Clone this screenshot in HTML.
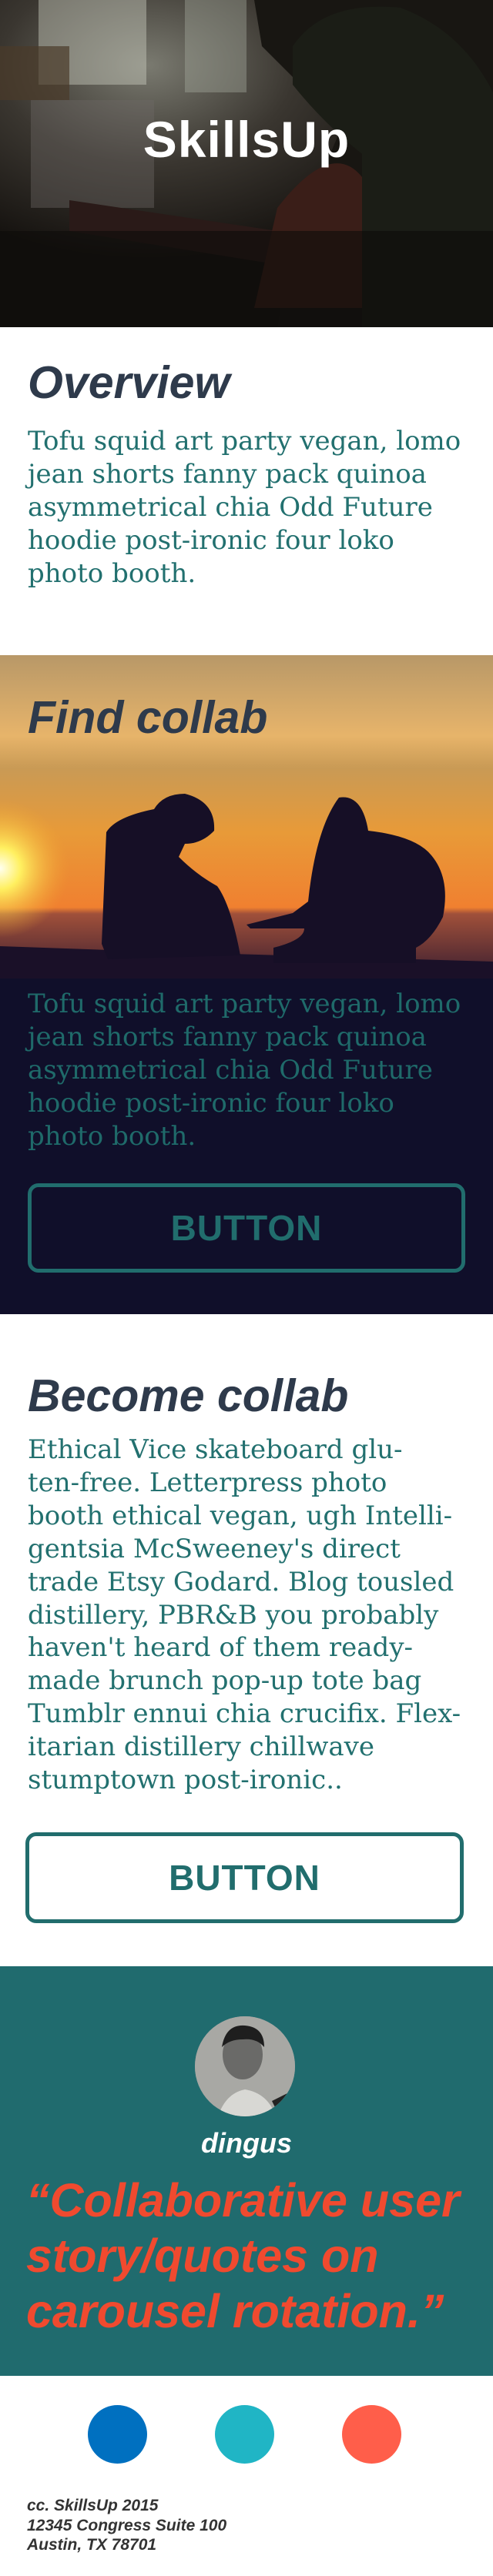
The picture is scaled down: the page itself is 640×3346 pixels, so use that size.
<!DOCTYPE html>
<html><head><meta charset="utf-8"><style>
*{margin:0;padding:0;box-sizing:border-box}
body{width:640px;height:3346px;position:relative;background:#fff;overflow:hidden;font-family:"Liberation Sans",sans-serif}
.abs{position:absolute}
h2{position:absolute;left:36px;font:italic bold 59px/1 "Liberation Sans",sans-serif;color:#2e3a4b;white-space:nowrap}
.body{position:absolute;left:36px;font:34px/43px "DejaVu Serif",serif;color:#22706f;white-space:pre}
.btn{position:absolute;border:5px solid #216d6d;border-radius:14px;color:#216d6d;font:bold 46px/1 "Liberation Sans",sans-serif;display:flex;align-items:center;justify-content:center;letter-spacing:1px}
.dot{position:absolute;width:77px;height:76px;border-radius:50%;top:3124px}
</style></head><body>
<!-- hero -->
<div class="abs" style="left:0;top:0;width:640px;height:425px;overflow:hidden;background:#1a1614">
<svg width="640" height="425" viewBox="0 0 640 425">
<defs>
<radialGradient id="w" cx="0.3" cy="0.2" r="0.6"><stop offset="0" stop-color="#7a7a70"/><stop offset="0.5" stop-color="#3a3630"/><stop offset="1" stop-color="#15120f"/></radialGradient>
</defs>
<rect width="640" height="425" fill="url(#w)"/>
<rect x="50" y="0" width="140" height="110" fill="#c8cabd" opacity=".45"/>
<rect x="240" y="0" width="80" height="120" fill="#a8aca0" opacity=".4"/>
<rect x="0" y="60" width="90" height="70" fill="#4a3a2a" opacity=".7"/>
<rect x="40" y="130" width="160" height="140" fill="#6e6a66" opacity=".4"/>
<path d="M330 0 L640 0 L640 425 L360 425 L380 300 L420 220 L450 150 L400 120 L340 60Z" fill="#181612"/>
<path d="M380 60 Q420 0 520 10 Q600 40 640 120 L640 425 L470 425 L470 200 Q420 160 380 110Z" fill="#1b1d16"/>
<path d="M90 260 L360 300 L420 320 L400 350 L90 300Z" fill="#2a1a18"/>
<path d="M360 270 Q430 180 470 230 L470 400 L330 400Z" fill="#3a1e18"/>
<rect x="0" y="300" width="640" height="125" fill="#0e0c0a" opacity=".6"/>
</svg>
<div class="abs" style="left:0;width:640px;top:148px;text-align:center;color:#fff;font:bold 66px/1 'Liberation Sans',sans-serif;letter-spacing:1px">SkillsUp</div>
</div>

<h2 style="top:468px">Overview</h2>
<div class="body" style="top:552px">Tofu squid art party vegan, lomo
jean shorts fanny pack quinoa
asymmetrical chia Odd Future
hoodie post-ironic four loko
photo booth.</div>

<!-- find collab -->
<div class="abs" style="left:0;top:851px;width:640px;height:856px;background:#100f2a;overflow:hidden">
<svg width="640" height="420" viewBox="0 0 640 420" style="position:absolute;left:0;top:0">
<defs>
<linearGradient id="s" x1="0" y1="0" x2="0" y2="1"><stop offset="0" stop-color="#b89868"/><stop offset="0.25" stop-color="#e7b46a"/><stop offset="0.35" stop-color="#c99a55"/><stop offset="0.55" stop-color="#e89a38"/><stop offset="0.78" stop-color="#f08030"/><stop offset="0.8" stop-color="#a0503a"/><stop offset="1" stop-color="#3a1e30"/></linearGradient>
<radialGradient id="sun" cx="0" cy="277" r="90" gradientUnits="userSpaceOnUse"><stop offset="0" stop-color="#fffff0"/><stop offset="0.3" stop-color="#fff060"/><stop offset="1" stop-color="#f0a030" stop-opacity="0"/></radialGradient>
</defs>
<rect width="640" height="420" fill="url(#s)"/>
<rect width="640" height="420" fill="url(#sun)"/>
<path d="M0 378 L200 385 L640 398 L640 420 L0 420Z" fill="#1a1028"/>
<g fill="#160f26">
<path d="M132 375 L138 230 Q150 210 200 200 Q212 180 240 180 Q280 190 278 228 Q262 245 240 245 L232 262 Q255 285 282 300 Q300 325 312 390 L140 395Z"/>
<path d="M320 350 L380 335 L400 320 Q410 225 440 185 Q470 180 478 228 Q540 235 560 260 Q585 290 575 340 Q560 370 540 380 L540 400 L355 400 L355 380 Q395 370 395 355 L325 355Z"/>
</g>
</svg>
<h2 style="top:52px">Find collab</h2>
<div class="body" style="top:432px;color:#1f6a6a">Tofu squid art party vegan, lomo
jean shorts fanny pack quinoa
asymmetrical chia Odd Future
hoodie post-ironic four loko
photo booth.</div>
<div class="btn" style="left:36px;top:686px;width:568px;height:116px">BUTTON</div>
</div>

<h2 style="top:1784px">Become collab</h2>
<div class="body" style="top:1862px;line-height:42.9px">Ethical Vice skateboard glu-
ten-free. Letterpress photo
booth ethical vegan, ugh Intelli-
gentsia McSweeney's direct
trade Etsy Godard. Blog tousled
distillery, PBR&amp;B you probably
haven't heard of them ready-
made brunch pop-up tote bag
Tumblr ennui chia crucifix. Flex-
itarian distillery chillwave
stumptown post-ironic..</div>
<div class="btn" style="left:33px;top:2380px;width:569px;height:118px">BUTTON</div>

<!-- testimonial -->
<div class="abs" style="left:0;top:2554px;width:640px;height:532px;background:#206b6e">
<div class="abs" style="left:253px;top:65px;width:130px;height:130px;border-radius:50%;overflow:hidden;background:#9a9a9a">
<svg width="130" height="130"><rect width="130" height="130" fill="#a8a8a4"/><path d="M30 130 Q40 100 65 95 Q95 100 105 130Z" fill="#d8d8d4"/><ellipse cx="62" cy="50" rx="26" ry="32" fill="#6a6a68"/><path d="M35 40 Q40 10 65 12 Q90 14 90 40 Q80 28 62 30 Q45 30 35 40Z" fill="#1e1e1e"/><path d="M100 110 L130 95 L130 130 L110 130Z" fill="#222"/></svg>
</div>
<div class="abs" style="left:0;width:640px;top:212px;text-align:center;color:#fff;font:italic bold 36px/1 'Liberation Sans',sans-serif">dingus</div>
<div class="abs" style="left:34px;top:268px;color:#f04a2f;font:italic bold 61px/72px 'Liberation Sans',sans-serif;white-space:pre">“Collaborative user
story/quotes on
carousel rotation.”</div>
</div>

<div class="dot" style="left:114px;background:#0070c0"></div>
<div class="dot" style="left:279px;background:#20b5c5"></div>
<div class="dot" style="left:444px;background:#ff5e4a"></div>

<div class="abs" style="left:35px;top:3242px;color:#333;font:italic bold 21px/25.5px 'Liberation Sans',sans-serif;white-space:pre">cc. SkillsUp 2015
12345 Congress Suite 100
Austin, TX 78701</div>
</body></html>
